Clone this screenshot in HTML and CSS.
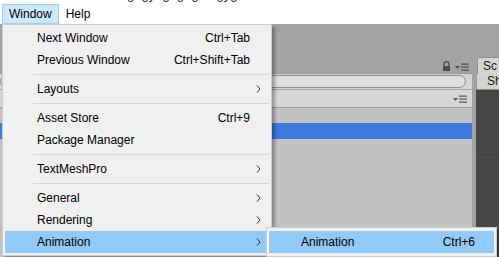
FILE: index.html
```html
<!DOCTYPE html>
<html>
<head>
<meta charset="utf-8">
<title>Window menu</title>
<link rel="stylesheet" href="styles.css">
</head>
<body>
<div class="caption"><span>g  gy  g  g  g     gyg</span></div>
<div class="menubar">
  <span class="mb-item open">Window</span>
  <span class="mb-item">Help</span>
</div>

<div class="editor">
  <div class="hier">
    <div class="hier-head">
      <svg class="lock" width="9" height="10" viewBox="0 0 9 10">
        <path d="M2 5V3.2a2.5 2.5 0 0 1 5 0V5" fill="none" stroke="#4a4a4a" stroke-width="1.3"/>
        <rect x="1" y="5" width="7" height="5" fill="#4a4a4a"/>
      </svg>
      <svg class="pane-menu" width="14" height="10" viewBox="0 0 14 10">
        <polygon points="0,5 5,5 2.5,8" fill="#555"/>
        <rect x="6" y="2.5" width="8" height="1.2" fill="#555"/>
        <rect x="6" y="5.5" width="8" height="1.2" fill="#555"/>
        <rect x="6" y="8.5" width="8" height="1.2" fill="#555"/>
      </svg>
    </div>
    <div class="hier-tools"><div class="search"></div></div>
    <div class="hier-bar">
      <svg class="pane-menu" width="14" height="10" viewBox="0 0 14 10">
        <polygon points="0,4 5,4 2.5,7" fill="#555"/>
        <rect x="6" y="1.5" width="8" height="1.2" fill="#555"/>
        <rect x="6" y="4.5" width="8" height="1.2" fill="#555"/>
        <rect x="6" y="7.5" width="8" height="1.2" fill="#555"/>
      </svg>
    </div>
    <div class="hier-list"><div class="hrow sel"></div></div>
  </div>
  <div class="scene">
    <div class="scene-head"><div class="tab">Sc</div></div>
    <div class="scene-tools">Sh</div>
    <div class="scene-view"><div class="grid-line"></div></div>
  </div>
</div>

<div class="menu">
  <div class="item"><span class="label">Next Window</span><span class="key">Ctrl+Tab</span><span class="arrow"></span></div>
  <div class="item"><span class="label">Previous Window</span><span class="key">Ctrl+Shift+Tab</span><span class="arrow"></span></div>
  <div class="sep"></div>
  <div class="item"><span class="label">Layouts</span><span class="arrow"><svg width="5" height="8" viewBox="0 0 5 8"><polyline points="1,0.5 4,4 1,7.5" fill="none" stroke="#333" stroke-width="1"/></svg></span></div>
  <div class="sep"></div>
  <div class="item"><span class="label">Asset Store</span><span class="key">Ctrl+9</span><span class="arrow"></span></div>
  <div class="item"><span class="label">Package Manager</span><span class="arrow"></span></div>
  <div class="sep"></div>
  <div class="item"><span class="label">TextMeshPro</span><span class="arrow"><svg width="5" height="8" viewBox="0 0 5 8"><polyline points="1,0.5 4,4 1,7.5" fill="none" stroke="#333" stroke-width="1"/></svg></span></div>
  <div class="sep"></div>
  <div class="item"><span class="label">General</span><span class="arrow"><svg width="5" height="8" viewBox="0 0 5 8"><polyline points="1,0.5 4,4 1,7.5" fill="none" stroke="#333" stroke-width="1"/></svg></span></div>
  <div class="item"><span class="label">Rendering</span><span class="arrow"><svg width="5" height="8" viewBox="0 0 5 8"><polyline points="1,0.5 4,4 1,7.5" fill="none" stroke="#333" stroke-width="1"/></svg></span></div>
  <div class="item hot"><span class="label">Animation</span><span class="arrow"><svg width="5" height="8" viewBox="0 0 5 8"><polyline points="1,0.5 4,4 1,7.5" fill="none" stroke="#333" stroke-width="1"/></svg></span></div>
</div>

<div class="menu submenu">
  <div class="item hot"><span class="label">Animation</span><span class="key">Ctrl+6</span><span class="arrow"></span></div>
</div>
</body>
</html>
```

FILE: styles.css
```css
*{margin:0;padding:0;box-sizing:border-box}
html,body{width:499px;height:257px;overflow:hidden}
body{position:relative;background:#fff;color:#000;font:12px "Liberation Sans",Arial,sans-serif}

/* cut-off title line above the menubar */
.caption{height:4px;overflow:hidden;padding-left:127px;white-space:pre;font-size:13px;color:#2a2a3a}
.caption span{display:block;margin-top:-13px;line-height:15px}

.menubar{height:20px;display:flex;padding-left:2px}
.mb-item{padding:0 6px;border:1px solid transparent;line-height:18px}
.mb-item.open{background:#cce8ff;border-color:#99d1ff}

/* editor behind the menu */
.editor{display:grid;grid-template-columns:472px 23px;column-gap:4px;height:233px;background:#a3a3a3}
.hier{display:grid;grid-template-rows:49px 17px 18px 1fr}
.hier-head{display:flex;justify-content:flex-end;align-items:flex-end;gap:4px;padding:0 3px 2px 0}
.hier-tools{display:flex;align-items:center;padding:0 6px 0 0;background:#d4d4d4;border-top:1px solid #9a9a9a;border-bottom:1px solid #a5a5a5}
.search{flex:1;height:13px;background:#dedede;border:1px solid #8c8c8c;border-radius:7px}
.hier-bar{display:flex;justify-content:flex-end;align-items:center;padding-right:5px;background:#d6d6d6;border-bottom:1px solid #9d9d9d}
.hier-list{padding-top:15px;background:#c2c2c2}
.hrow{height:16px}
.hrow.sel{background:#3d7ae0}

.scene{display:grid;grid-template-rows:50px 16px 1fr;overflow:hidden}
.scene-head{display:flex;align-items:flex-end;padding-left:1px}
.tab{width:30px;height:17px;padding-left:5px;line-height:16px;color:#1c1c1c;background:#d4d4d4;border:1px solid #8f8f8f;border-bottom:none;border-radius:2px 2px 0 0}
.scene-tools{padding-left:10px;line-height:15px;color:#1c1c1c;background:#d2d2d2;border-bottom:1px solid #8a8a8a;border-left:1px solid #9a9a9a}
.scene-view{background:#474747}
.grid-line{height:1px;margin-top:67px;background:#525252}

/* dropdown menus */
.menu{position:absolute;left:2px;top:24px;width:270px;padding:2px;background:#f0f0f0;border:1px solid #cccccc;box-shadow:3px 3px 3px rgba(0,0,0,.3)}
.item{height:22px;display:flex;align-items:center;padding-left:32px;white-space:nowrap}
.item .label{flex:1}
.item .arrow{width:19px;height:8px;padding-left:6px;display:flex}
.item.hot{background:#91c9f7}
.sep{height:1px;margin:3px 0 3px 28px;background:#d7d7d7}

.submenu{left:266px;top:227px;width:231px;padding:3px 2px}
```
